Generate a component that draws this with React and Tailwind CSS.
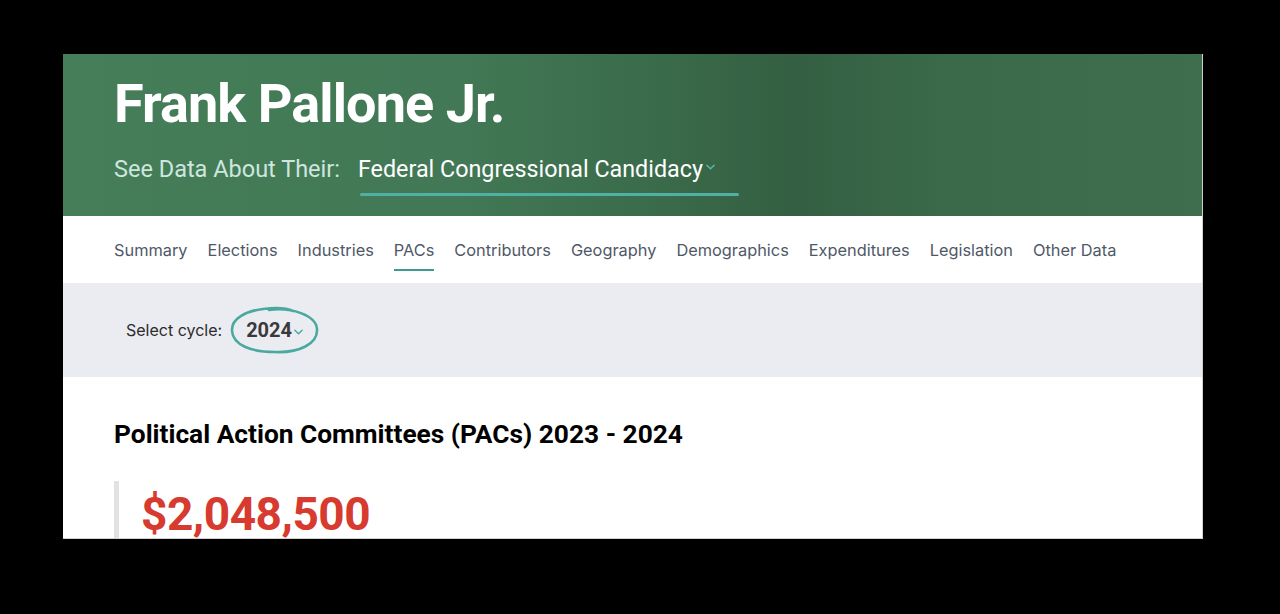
import React from "react";

const navItems = [
  "Summary",
  "Elections",
  "Industries",
  "PACs",
  "Contributors",
  "Geography",
  "Demographics",
  "Expenditures",
  "Legislation",
  "Other Data",
];

function Chevron({ className }) {
  return (
    <svg viewBox="0 0 10 6" className={className} fill="none">
      <path d="M1 1l4 4 4-4" stroke="currentColor" strokeWidth="1.6" strokeLinecap="round" strokeLinejoin="round" />
    </svg>
  );
}

export default function App() {
  return (
    <div className="w-[1280px] h-[614px] bg-black pt-[54px] pl-[63px] overflow-hidden">
      <div className="w-[1140px] h-[485px] bg-white overflow-hidden flex flex-col border-r border-b border-[#cfcfcf]">
        {/* Header */}
        <div className="h-[162px] shrink-0 pl-[51px] pt-[20px] bg-[linear-gradient(90deg,#467e59_0%,#427855_35%,#3a6b4a_52%,#345f42_64%,#3a6a4a_78%,#3e6e4d_100%)]">
          <h1 className="text-white font-bold text-[54px] leading-[60px] tracking-[-0.017em] [font-family:Roboto,'Liberation_Sans',sans-serif]">
            Frank Pallone Jr.
          </h1>
          <div className="mt-[21px] flex items-start">
            <span className="text-[23.5px] leading-[28px] text-[#cfe6df] [font-family:Roboto,'Liberation_Sans',sans-serif]">
              See Data About Their:
            </span>
            <div className="ml-[18px] flex flex-col">
              <div className="flex items-center">
                <span className="text-[23.3px] leading-[28px] text-white [font-family:Roboto,'Liberation_Sans',sans-serif]">
                  Federal Congressional Candidacy
                </span>
                <Chevron className="w-[9px] h-[6px] ml-[3px] mb-[4px] text-[#58b7ad]" />
              </div>
              <div className="mt-[10px] ml-[2px] w-[379px] h-[3px] rounded-full bg-[#4fb0a6]" />
            </div>
          </div>
        </div>

        {/* Nav */}
        <div className="h-[67px] shrink-0 pl-[51px] flex items-center gap-[20px] [font-family:Inter,sans-serif]">
          {navItems.map((item) => (
            <div key={item} className="relative">
              <span className="text-[16.35px] leading-[20px] text-[#4f5867]">{item}</span>
              {item === "PACs" && (
                <div className="absolute left-0 right-0 top-[31px] h-[2px] bg-[#3e9c8e]" />
              )}
            </div>
          ))}
        </div>

        {/* Cycle selector */}
        <div className="h-[94px] shrink-0 bg-[#ebecf1] pl-[63px] flex items-center [font-family:Inter,sans-serif]">
          <span className="text-[16px] text-[#2b2b2b]">Select cycle:</span>
          <div className="relative ml-[24px] flex items-center">
            <span className="text-[20px] leading-[26px] font-bold text-[#3a3a3a] [font-family:Roboto,'Liberation_Sans',sans-serif]">2024</span>
            <Chevron className="w-[9px] h-[6px] ml-[2px] mt-[4px] text-[#4aa99f]" />
            <svg
              className="absolute left-[-17px] top-[-12px] w-[92px] h-[50px]"
              viewBox="0 0 92 50"
              fill="none"
            >
              <path
                d="M40 5 C62 2 87 10 88 24 C89 39 70 48 46 47 C22 47 4 40 3 26 C2 13 18 6 34 4 C48 2 58 3 64 6"
                stroke="#4aa99f"
                strokeWidth="2.6"
                strokeLinecap="round"
              />
            </svg>
          </div>
        </div>

        {/* Content */}
        <div className="pl-[51px] pt-[41px]">
          <h2 className="text-[26.3px] leading-[32px] font-bold text-black [font-family:Roboto,'Liberation_Sans',sans-serif]">
            Political Action Committees (PACs) 2023 - 2024
          </h2>
          <div className="mt-[31px] border-l-[5px] border-[#e2e2e2] pl-[22px] pt-[8px] h-[80px]">
            <div className="text-[46px] leading-[50px] font-bold text-[#d73a2e] tracking-[-0.01em] [font-family:Roboto,'Liberation_Sans',sans-serif]">
              $2,048,500
            </div>
          </div>
        </div>
      </div>
    </div>
  );
}
